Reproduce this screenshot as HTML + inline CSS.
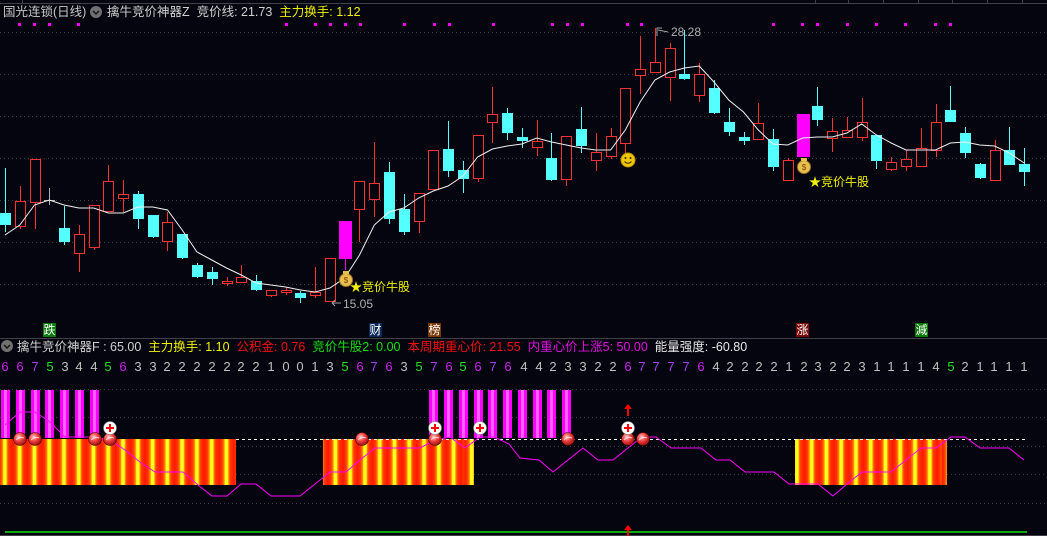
<!DOCTYPE html>
<html><head><meta charset="utf-8"><style>
html,body{margin:0;padding:0;background:#05050f;}
body{width:1047px;height:536px;overflow:hidden;position:relative;font-family:"Liberation Sans","Noto Sans CJK SC",sans-serif;}
svg{position:absolute;left:0;top:0;}
.t{position:absolute;font-size:12.5px;white-space:nowrap;line-height:14px;}
.lbl{position:absolute;top:323px;width:13px;height:14px;font-size:12px;line-height:14px;text-align:center;color:#fff;}
.nums{position:absolute;top:360px;font-size:13px;line-height:14px;}
.nums span{position:absolute;width:12px;margin-left:-6px;text-align:center;}
.stripe{position:absolute;top:439px;height:46px;background:repeating-linear-gradient(90deg,#ff1800 0px,#ff3a00 3px,#ff8a00 5px,#ffff20 6px,#ffff20 8.5px,#ff8a00 9.5px,#ff3a00 11px,#ff1800 14.77px);}
</style></head><body>
<div class="stripe" style="left:0;width:236px;background-position:-2.4px 0"></div>
<div class="stripe" style="left:323px;width:151px;background-position:-9.6px 0"></div>
<div class="stripe" style="left:795px;width:152px;background-position:-5.4px 0"></div>
<svg id="s" width="1047" height="536" xmlns="http://www.w3.org/2000/svg"></svg>

<div class="t" style="left:3px;top:5px;color:#c8c8c8">国光连锁(日线)</div>
<div class="t" style="left:107px;top:5px;color:#d0d0d0">擒牛竞价神器Z&nbsp; 竞价线: 21.73&nbsp; <span style="color:#f0f000">主力换手: 1.12</span></div>
<div class="t" style="left:671px;top:25px;color:#b0b0b0;font-size:12px">28.28</div>
<div class="t" style="left:343px;top:297px;color:#b0b0b0;font-size:12px">15.05</div>
<div class="t" style="left:350px;top:280px;color:#f0f000;font-size:12px">★竞价牛股</div>
<div class="t" style="left:809px;top:175px;color:#f0f000;font-size:12px">★竞价牛股</div>

<div class="lbl" style="left:43px;background:#0a7a0a">跌</div>
<div class="lbl" style="left:369px;background:#0a2a5a">财</div>
<div class="lbl" style="left:428px;background:#7a3a08">榜</div>
<div class="lbl" style="left:796px;background:#7a0a0a">涨</div>
<div class="lbl" style="left:915px;background:#0a7a0a">減</div>

<div class="t" style="left:17px;top:340px;color:#d0d0d0">擒牛竞价神器F : 65.00&nbsp; <span style="color:#f0f000">主力换手: 1.10</span>&nbsp; <span style="color:#f01010">公积金: 0.76</span>&nbsp; <span style="color:#10e010">竞价牛股2: 0.00</span>&nbsp; <span style="color:#f01010">本周期重心价: 21.55</span>&nbsp; <span style="color:#e010e0">内重心价上涨5: 50.00</span>&nbsp; <span style="color:#e8e8e8">能量强度: -60.80</span></div>

<div class="nums" id="nums"><span style="left:5px;color:#d020f0">6</span><span style="left:20px;color:#d020f0">6</span><span style="left:35px;color:#a040f0">7</span><span style="left:50px;color:#20e020">5</span><span style="left:65px;color:#c0c0c0">3</span><span style="left:79px;color:#c0c0c0">4</span><span style="left:94px;color:#c0c0c0">4</span><span style="left:108px;color:#20e020">5</span><span style="left:123px;color:#d020f0">6</span><span style="left:138px;color:#c0c0c0">3</span><span style="left:153px;color:#c0c0c0">3</span><span style="left:167px;color:#c0c0c0">2</span><span style="left:182px;color:#c0c0c0">2</span><span style="left:197px;color:#c0c0c0">2</span><span style="left:212px;color:#c0c0c0">2</span><span style="left:227px;color:#c0c0c0">2</span><span style="left:241px;color:#c0c0c0">2</span><span style="left:256px;color:#c0c0c0">2</span><span style="left:271px;color:#c0c0c0">1</span><span style="left:286px;color:#c0c0c0">0</span><span style="left:300px;color:#c0c0c0">0</span><span style="left:315px;color:#c0c0c0">1</span><span style="left:330px;color:#c0c0c0">3</span><span style="left:345px;color:#20e020">5</span><span style="left:360px;color:#d020f0">6</span><span style="left:374px;color:#a040f0">7</span><span style="left:389px;color:#d020f0">6</span><span style="left:404px;color:#c0c0c0">3</span><span style="left:419px;color:#20e020">5</span><span style="left:434px;color:#a040f0">7</span><span style="left:449px;color:#d020f0">6</span><span style="left:463px;color:#20e020">5</span><span style="left:478px;color:#d020f0">6</span><span style="left:493px;color:#a040f0">7</span><span style="left:508px;color:#d020f0">6</span><span style="left:524px;color:#c0c0c0">4</span><span style="left:539px;color:#c0c0c0">4</span><span style="left:553px;color:#c0c0c0">2</span><span style="left:568px;color:#c0c0c0">3</span><span style="left:583px;color:#c0c0c0">3</span><span style="left:598px;color:#c0c0c0">2</span><span style="left:613px;color:#c0c0c0">2</span><span style="left:628px;color:#d020f0">6</span><span style="left:642px;color:#a040f0">7</span><span style="left:656px;color:#a040f0">7</span><span style="left:671px;color:#a040f0">7</span><span style="left:686px;color:#a040f0">7</span><span style="left:701px;color:#d020f0">6</span><span style="left:716px;color:#c0c0c0">4</span><span style="left:730px;color:#c0c0c0">2</span><span style="left:745px;color:#c0c0c0">2</span><span style="left:759px;color:#c0c0c0">2</span><span style="left:774px;color:#c0c0c0">2</span><span style="left:789px;color:#c0c0c0">1</span><span style="left:804px;color:#c0c0c0">2</span><span style="left:818px;color:#c0c0c0">3</span><span style="left:833px;color:#c0c0c0">2</span><span style="left:847px;color:#c0c0c0">2</span><span style="left:862px;color:#c0c0c0">3</span><span style="left:877px;color:#c0c0c0">1</span><span style="left:891px;color:#c0c0c0">1</span><span style="left:906px;color:#c0c0c0">1</span><span style="left:921px;color:#c0c0c0">1</span><span style="left:936px;color:#c0c0c0">4</span><span style="left:951px;color:#20e020">5</span><span style="left:965px;color:#c0c0c0">2</span><span style="left:980px;color:#c0c0c0">1</span><span style="left:994px;color:#c0c0c0">1</span><span style="left:1009px;color:#c0c0c0">1</span><span style="left:1024px;color:#c0c0c0">1</span></div>

<script>
var s=document.getElementById('s'),h='';
function X(i){return 5+14.77*i;}
[32,74,116,158,200,242,284,389,417,503].forEach(function(y){h+='<line x1="0" x2="1047" y1="'+(y+.5)+'" y2="'+(y+.5)+'" stroke="#3a3a48" stroke-dasharray="1 3"/>';});
[446,474].forEach(function(y){[[236,323],[474,795],[947,1047]].forEach(function(r){h+='<line x1="'+r[0]+'" x2="'+r[1]+'" y1="'+(y+.5)+'" y2="'+(y+.5)+'" stroke="#3a3a48" stroke-dasharray="1 3"/>';});});
h+='<line x1="0" x2="1047" y1="3.5" y2="3.5" stroke="#404048"/><line x1="22.5" x2="22.5" y1="0" y2="3" stroke="#404048"/>';
[815,848,883,918,952,987,1022].forEach(function(x){h+='<line x1="'+(x+.5)+'" x2="'+(x+.5)+'" y1="0" y2="3" stroke="#404048"/>';});
h+='<line x1="0" x2="1047" y1="338.5" y2="338.5" stroke="#404048"/><line x1="0" x2="1047" y1="535.5" y2="535.5" stroke="#404048"/>';
[19,34,49,78,286,315,330,345,360,404,434,449,493,552,567,582,627,641,773,802,817,847,876,905,935,950].forEach(function(x){h+='<rect x="'+(x-1)+'" y="23" width="3" height="3" fill="#ff00ff"/>';});
var C=[['c',213,225,168,232],['r',201,226,186,229],['r',159,202,159,229],['g',200,201,188,205],['c',228,242,206,245],['r',234,253,225,272],['r',205,247,205,250],['r',181,211,165,211],['r',194,198,180,212],['c',194,219,191,229],['c',215,237,215,238],['r',222,241,212,251],['c',234,258,234,259],['c',265,277,263,278],['c',272,279,267,285],['r',281,283,277,286],['r',277,282,265,282],['c',281,290,275,291],['r',290,295,290,297],['r',290,292,287,295],['c',293,298,291,303],['r',292,295,267,298],['r',258,301,258,301],['m',221,259,221,270],['r',181,209,181,242],['r',183,199,142,217],['c',172,219,162,224],['c',209,232,194,235],['r',193,221,193,233],['r',150,189,150,189],['c',149,171,121,177],['c',170,179,161,193],['r',135,178,135,182],['r',114,122,87,143],['c',113,133,108,140],['c',137,141,128,148],['r',141,147,120,156],['c',158,180,133,181],['r',136,179,136,186],['c',129,146,107,153],['r',152,160,133,171],['r',136,156,128,159],['r',88,143,88,153],['r',69,75,36,94],['r',62,72,28,72],['r',48,77,43,101],['c',74,79,30,80],['r',74,95,63,102],['c',88,113,80,114],['c',122,132,108,136],['c',137,141,132,145],['r',123,139,103,139],['c',139,167,129,171],['r',160,180,158,181],['m',114,157,114,157],['c',106,120,87,126],['r',131,138,118,152],['r',130,137,117,137],['r',122,137,98,141],['c',135,161,135,169],['r',162,169,157,171],['r',159,166,150,171],['r',148,166,128,166],['r',122,150,104,157],['c',110,122,86,122],['c',133,153,127,158],['c',164,178,163,179],['r',150,180,140,180],['c',150,165,127,165],['c',164,172,148,186]];
C.forEach(function(c,i){var x=Math.round(X(i)),t=c[0];
 var col=t=='r'?'#ff3232':t=='c'?'#54ffff':t=='m'?'#ff00ff':'#b0b0b0';
 h+='<line x1="'+(x+.5)+'" x2="'+(x+.5)+'" y1="'+c[3]+'" y2="'+c[4]+'" stroke="'+col+'"/>';
 if(t=='r')h+='<rect x="'+(x-5+.5)+'" y="'+(c[1]+.5)+'" width="10" height="'+Math.max(1,c[2]-c[1])+'" fill="#05050f" stroke="'+col+'"/>';
 else if(t=='g')h+='<line x1="'+(x-5)+'" x2="'+(x+6)+'" y1="200.5" y2="200.5" stroke="'+col+'"/>';
 else h+='<rect x="'+(x-5)+'" y="'+c[1]+'" width="'+(t=='m'?13:11)+'" height="'+Math.max(2,c[2]-c[1])+'" fill="'+col+'" transform="translate('+(t=='m'?-1:0)+',0)"/>';
});
var ma=[235,225,205,200,205,208,208,213,213,207,207,210,230,252,260,268,275,283,285,287,290,292,288,278,255,225,212,208,198,191,186,176,157,149,146,144,138,142,145,148,150,150,130,102,80,72,68,66,82,100,112,130,144,145,138,137,137,133,124,135,143,150,150,150,143,142,145,146,153,163];
h+='<polyline fill="none" stroke="#f0f0f0" stroke-width="1" points="'+ma.map(function(y,i){return X(i).toFixed(1)+','+y;}).join(' ')+'"/>';
h+='<path d="M657 36 L657 28 L662 28 M658 30 L668 32" stroke="#a0a0a0" fill="none"/>';
h+='<path d="M332 303 L341 303 M332 303 L335 300 M332 303 L335 306" stroke="#a0a0a0" fill="none"/>';
h+='<circle cx="628" cy="160" r="7" fill="#f0c800" stroke="#c09000"/><circle cx="625.5" cy="158" r="1" fill="#402000"/><circle cx="630.5" cy="158" r="1" fill="#402000"/><path d="M624.5 161.5 Q628 165 631.5 161.5" stroke="#402000" fill="none"/>';
function bag(x,y){return '<circle cx="'+x+'" cy="'+(y+2)+'" r="6.5" fill="#e8c050" stroke="#a07020"/><rect x="'+(x-3)+'" y="'+(y-7)+'" width="6" height="3" fill="#e8c050"/><text x="'+x+'" y="'+(y+5)+'" font-size="8" fill="#804000" text-anchor="middle" font-family="Liberation Sans">$</text>';}
h+=bag(346,278)+bag(804,165);
[0,1,2,3,4,5,6,29,30,31,32,33,34,35,36,37,38].forEach(function(i){var x=Math.round(X(i));h+='<rect x="'+(x-4)+'" y="390" width="9" height="48" fill="#ff00ff"/><rect x="'+(x-1)+'" y="390" width="3" height="48" fill="#ff60ff"/>';});
h+='<line x1="236" x2="1027" y1="439.5" y2="439.5" stroke="#ffffff" stroke-dasharray="3 3"/>';
var ml=[[5,425],[20,412],[35,412],[50,422],[65,437],[80,437],[95,437],[110,440],[125,450],[140,462],[155,472],[183,472],[198,485],[212,496],[227,496],[241,484],[256,484],[271,496],[300,496],[315,484],[330,472],[346,472],[360,460],[375,448],[420,448],[435,440],[450,437],[465,448],[480,437],[494,437],[509,444],[520,458],[539,460],[553,472],[568,460],[583,448],[598,460],[613,460],[628,448],[642,437],[656,437],[671,448],[701,448],[716,460],[730,460],[745,472],[774,472],[789,484],[818,484],[833,496],[847,484],[862,472],[891,472],[906,460],[921,448],[936,448],[951,437],[965,437],[980,448],[1009,448],[1024,460]];
h+='<polyline fill="none" stroke="#ff00ff" points="'+ml.map(function(p){return p.join(',');}).join(' ')+'"/>';
h+='<defs><radialGradient id="b" cx="40%" cy="35%" r="65%"><stop offset="0" stop-color="#ffd0d0"/><stop offset=".5" stop-color="#f04040"/><stop offset="1" stop-color="#a01010"/></radialGradient></defs>';
[20,35,95,110,362,435,568,628,643].forEach(function(x){h+='<circle cx="'+x+'" cy="439" r="6.5" fill="url(#b)" stroke="#400000" stroke-width=".6"/><path d="M'+(x-4)+' 440 Q'+x+' 436 '+(x+4)+' 438" stroke="#fff" stroke-width="1" fill="none" opacity=".7"/>';});
[110,435,480,628].forEach(function(x){h+='<circle cx="'+x+'" cy="428" r="6.5" fill="#ffffff" stroke="#808080" stroke-width=".6"/><rect x="'+(x-4)+'" y="427" width="8" height="2" fill="#ff0000"/><rect x="'+(x-1)+'" y="424" width="2" height="8" fill="#ff0000"/>';});
h+='<path d="M628 404 L632 409 L629 409 L629 416 L627 416 L627 409 L624 409 Z" fill="#ff0000"/>';
h+='<line x1="5" x2="1027" y1="532" y2="532" stroke="#10e010" stroke-width="1.5"/>';
h+='<path d="M628 525 L632 530 L629 530 L629 536 L627 536 L627 530 L624 530 Z" fill="#ff0000"/>';
function ci(x,y){return '<circle cx="'+x+'" cy="'+y+'" r="6" fill="#707070"/><path d="M'+(x-3)+' '+(y-1)+' L'+x+' '+(y+2)+' L'+(x+3)+' '+(y-1)+'" stroke="#151515" stroke-width="1.5" fill="none"/>';}
h+=ci(96,12)+ci(7,346);
s.innerHTML=h;
</script>
</body></html>
